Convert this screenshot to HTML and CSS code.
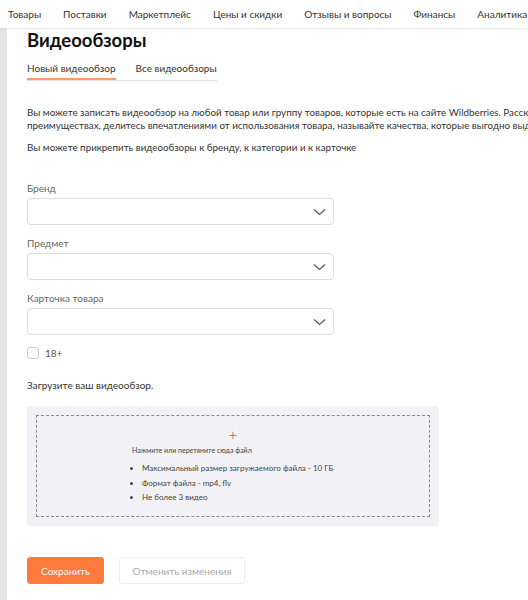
FILE: index.html
```html
<!DOCTYPE html>
<html lang="ru">
<head>
    <meta charset="UTF-8">
    <title>Видеообзоры</title>
    <link rel="stylesheet" href="styles.css">
</head>
<body>
    <header class="topbar">
        <nav class="menu">
            <a>Товары</a>
            <a>Поставки</a>
            <a>Маркетплейс</a>
            <a>Цены и скидки</a>
            <a>Отзывы и вопросы</a>
            <a>Финансы</a>
            <a>Аналитика</a>
        </nav>
    </header>
    <div class="layout">
        <aside class="sidebar"></aside>
        <main class="content">
            <h1>Видеообзоры</h1>
            <div class="tabs">
                <span class="tab active">Новый видеообзор</span>
                <span class="tab">Все видеообзоры</span>
            </div>

            <p class="intro">Вы можете записать видеообзор на любой товар или группу товаров, которые есть на сайте Wildberries. Расскажите о<br>преимуществах, делитесь впечатлениями от использования товара, называйте качества, которые выгодно выделяют его</p>
            <p class="intro">Вы можете прикрепить видеообзоры к бренду, к категории и к карточке</p>

            <div class="field first">
                <label>Бренд</label>
                <div class="select"><svg width="13" height="8" viewBox="0 0 13 8"><path d="M1 1.5l5.5 5 5.5-5" fill="none" stroke="#555" stroke-width="1.2"/></svg></div>
            </div>
            <div class="field">
                <label>Предмет</label>
                <div class="select"><svg width="13" height="8" viewBox="0 0 13 8"><path d="M1 1.5l5.5 5 5.5-5" fill="none" stroke="#555" stroke-width="1.2"/></svg></div>
            </div>
            <div class="field">
                <label>Карточка товара</label>
                <div class="select"><svg width="13" height="8" viewBox="0 0 13 8"><path d="M1 1.5l5.5 5 5.5-5" fill="none" stroke="#555" stroke-width="1.2"/></svg></div>
            </div>

            <label class="check"><span class="box"></span>18+</label>

            <p class="upload-title">Загрузите ваш видеообзор.</p>
            <div class="upload">
                <div class="drop">
                    <div class="drop-inner">
                        <div class="plus">+</div>
                        <div class="hint">Нажмите или перетяните сюда файл</div>
                        <ul>
                            <li>Максимальный размер загружаемого файла - 10 ГБ</li>
                            <li>Формат файла - mp4, flv</li>
                            <li>Не более 3 видео</li>
                        </ul>
                    </div>
                </div>
            </div>

            <div class="actions">
                <button class="btn primary">Сохранить</button>
                <button class="btn">Отменить изменения</button>
            </div>
        </main>
    </div>
</body>
</html>
```

FILE: styles.css
```css
body {
    font-family: Lato, "Open Sans", sans-serif;
    color: #333;
    margin: 0;
    background-color: #fff;
    overflow: hidden;
}

.topbar {
    height: 28px;
    background-color: #fff;
    box-shadow: 0 1px 2px rgba(0, 0, 0, 0.1);
    position: relative;
    z-index: 1;
    white-space: nowrap;
    overflow: hidden;
}

.menu {
    display: flex;
    gap: 22px;
    padding-left: 8px;
    height: 28px;
    align-items: center;
}

.menu a {
    font-size: 10px;
    color: #333;
}

.layout {
    display: flex;
}

.sidebar {
    width: 7px;
    background-color: #e6e6e6;
    flex-shrink: 0;
    min-height: 580px;
}

.content {
    padding-left: 20px;
    flex: 1;
    min-width: 0;
    overflow: hidden;
}

h1 {
    font-size: 18.5px;
    font-weight: 700;
    color: #111;
    margin: 1px 0 0;
    line-height: 22px;
}

.tabs {
    display: inline-flex;
    gap: 20px;
    margin-top: 6px;
    border-bottom: 1px solid #e0e0e0;
}

.tab {
    font-size: 10px;
    line-height: 12px;
    color: #333;
    padding: 5px 0 6px;
}

.tab.active {
    box-shadow: inset 0 -2px 0 #ff9b6a;
}

.intro {
    font-size: 9.8px;
    line-height: 13px;
    margin: 9px 0 0;
    white-space: nowrap;
}

.intro:first-of-type {
    margin-top: 25px;
}

.field {
    width: 307px;
    margin-top: 12px;
}

.field.first {
    margin-top: 28px;
}

.field label {
    display: block;
    font-size: 10px;
    color: #666;
    margin-bottom: 4px;
    line-height: 12px;
}

.select {
    height: 25px;
    border: 1px solid #ddd;
    border-radius: 4px;
    display: flex;
    align-items: center;
    justify-content: flex-end;
    padding-right: 7px;
}

.check {
    display: flex;
    align-items: center;
    gap: 6px;
    font-size: 10px;
    line-height: 12px;
    color: #555;
    margin-top: 12px;
}

.box {
    width: 10px;
    height: 10px;
    border: 1px solid #ccc;
    border-radius: 3px;
}

.upload-title {
    font-size: 10px;
    line-height: 12px;
    margin: 20px 0 0;
}

.upload {
    width: 394px;
    margin-top: 15px;
    background-color: #f2f2f6;
    border-radius: 3px;
    padding: 9px;
}

.drop {
    border: 1px dashed #888;
    height: 100px;
    display: flex;
    justify-content: center;
}

.drop-inner {
    padding-top: 12px;
    width: 202px;
}

.plus {
    text-align: center;
    font-size: 16px;
    line-height: 14px;
    color: #555;
    font-weight: 300;
}

.hint {
    font-size: 7px;
    line-height: 10px;
    color: #444;
    margin-top: 3px;
}

ul {
    margin: 8px 0 0;
    padding-left: 10px;
    font-size: 8px;
    line-height: 10px;
    color: #444;
}

li {
    margin-bottom: 4.5px;
}

.actions {
    display: flex;
    gap: 15px;
    margin-top: 31px;
}

.btn {
    font-family: Lato, sans-serif;
    font-size: 10px;
    height: 27px;
    border-radius: 3px;
    border: 1px solid #eee;
    background-color: #fff;
    color: #aaa;
    padding: 0;
    width: 126px;
    white-space: nowrap;
}

.btn.primary {
    background-color: #ff7a3c;
    border-color: #ff7a3c;
    color: #fff;
    width: 77px;
}
```
